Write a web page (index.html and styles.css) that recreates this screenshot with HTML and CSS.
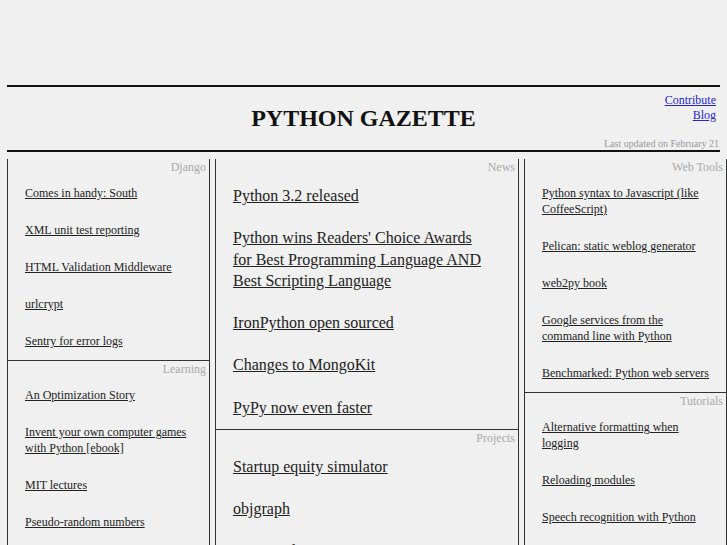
FILE: index.html
```html
<!DOCTYPE html>
<html>
<head>
<meta charset="utf-8">
<title>Python Gazette</title>
<link rel="stylesheet" href="styles.css">
</head>
<body>
<header class="masthead">
  <div class="masthead-row">
    <div class="spacer"></div>
    <h1 class="title">PYTHON GAZETTE</h1>
    <nav class="toplinks">
      <a href="#">Contribute</a>
      <a href="#">Blog</a>
    </nav>
  </div>
  <div class="updated">Last updated on February 21</div>
</header>

<div class="columns">
  <div class="col col-side">
    <section class="box">
      <div class="label">Django</div>
      <ul class="links">
        <li><a href="#">Comes in handy: South</a></li>
        <li><a href="#">XML unit test reporting</a></li>
        <li><a href="#">HTML Validation Middleware</a></li>
        <li><a href="#">urlcrypt</a></li>
        <li><a href="#">Sentry for error logs</a></li>
      </ul>
    </section>
    <section class="box">
      <div class="label">Learning</div>
      <ul class="links">
        <li><a href="#">An Optimization Story</a></li>
        <li><a href="#">Invent your own computer games with Python [ebook]</a></li>
        <li><a href="#">MIT lectures</a></li>
        <li><a href="#">Pseudo-random numbers</a></li>
        <li><a href="#">Python for kids</a></li>
      </ul>
    </section>
  </div>

  <div class="col col-main">
    <section class="box">
      <div class="label">News</div>
      <ul class="links">
        <li><a href="#">Python 3.2 released</a></li>
        <li><a href="#">Python wins Readers' Choice Awards for Best Programming Language AND Best Scripting Language</a></li>
        <li><a href="#">IronPython open sourced</a></li>
        <li><a href="#">Changes to MongoKit</a></li>
        <li><a href="#">PyPy now even faster</a></li>
      </ul>
    </section>
    <section class="box">
      <div class="label">Projects</div>
      <ul class="links">
        <li><a href="#">Startup equity simulator</a></li>
        <li><a href="#">objgraph</a></li>
        <li><a href="#">Mercurial 1.8</a></li>
      </ul>
    </section>
  </div>

  <div class="col col-side col-right">
    <section class="box">
      <div class="label">Web Tools</div>
      <ul class="links">
        <li><a href="#">Python syntax to Javascript (like CoffeeScript)</a></li>
        <li><a href="#">Pelican: static weblog generator</a></li>
        <li><a href="#">web2py book</a></li>
        <li><a href="#">Google services from the command line with Python</a></li>
        <li><a href="#">Benchmarked: Python web servers</a></li>
      </ul>
    </section>
    <section class="box">
      <div class="label">Tutorials</div>
      <ul class="links">
        <li><a href="#">Alternative formatting when logging</a></li>
        <li><a href="#">Reloading modules</a></li>
        <li><a href="#">Speech recognition with Python</a></li>
        <li><a href="#">Decorators explained</a></li>
      </ul>
    </section>
  </div>
</div>
</body>
</html>
```

FILE: styles.css
```css
html, body {
  margin: 0;
  padding: 0;
  background: #f0f0f0;
}
body {
  padding: 85px 7px 0 7px;
  font-family: "Liberation Serif", "Times New Roman", serif;
  color: #222;
  overflow: hidden;
  height: 545px;
  box-sizing: border-box;
}
.masthead {
  border-top: 2px solid #111;
  border-bottom: 2px solid #111;
  padding-top: 6px;
}
.masthead-row {
  display: grid;
  grid-template-columns: 1fr auto 1fr;
  align-items: start;
}
.title {
  margin: 10px 0 0 0;
  font-size: 24px;
  line-height: 30px;
  font-weight: bold;
  color: #111;
  text-align: center;
}
.toplinks {
  display: flex;
  flex-direction: column;
  align-items: flex-end;
  padding-right: 4px;
}
.toplinks a {
  font-size: 12px;
  line-height: 15px;
  color: #2525d0;
  text-decoration: underline;
}
.updated {
  margin-top: 5px;
  text-align: right;
  font-size: 10px;
  line-height: 12px;
  color: #999;
  padding-right: 1px;
}
.columns {
  display: flex;
  gap: 5px;
  margin-top: 7px;
  margin-right: -7px;
  align-items: flex-start;
}
.col {
  flex: 0 0 auto;
  box-sizing: border-box;
  border-left: 1px solid #333;
  border-right: 1px solid #333;
}
.col-side { width: 203px; }
.col-main { width: 304px; }
.box {
  border-top: 1px solid #333;
  padding: 1px 3px 11px 17px;
}
.col .box:first-child {
  border-top: none;
}
.label {
  text-align: right;
  font-size: 12px;
  line-height: 14px;
  color: #aaa;
  margin-bottom: 11px;
}
.links {
  list-style: none;
  margin: 0;
  padding: 0 10px 0 0;
}
.links li {
  font-size: 12px;
  line-height: 16px;
  margin-bottom: 21px;
}
.links li:last-child {
  margin-bottom: 0;
}
.links a {
  color: #222;
  text-decoration: underline;
}
.col-main .links {
  padding-right: 27px;
}
.col-main .links li {
  font-size: 16px;
  line-height: 21px;
}
.col-main .box:first-child .links li {
  line-height: 21.3px;
}
.col-right .links {
  padding-right: 13px;
}
```
